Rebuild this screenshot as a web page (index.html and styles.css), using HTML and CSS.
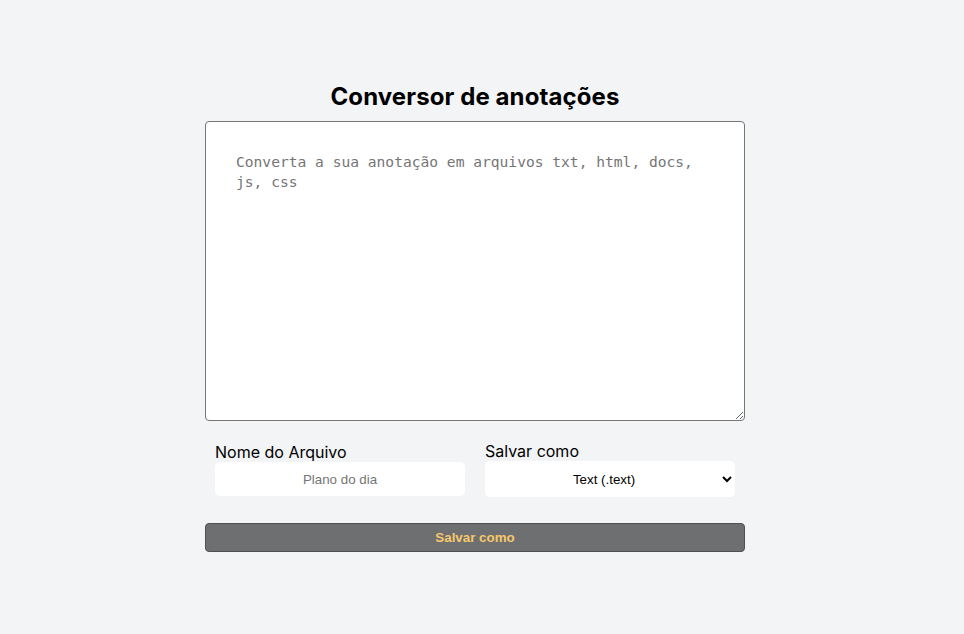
FILE: index.html
```html
<!DOCTYPE html>
<html lang="pt">
<head>
<meta charset="utf-8">
<title>Conversor de anotações</title>
<link rel="stylesheet" href="styles.css">
</head>
<body>
<main class="page">
  <div class="app">
    <h1 class="title">Conversor de anotações</h1>
    <textarea class="note" placeholder="Converta a sua anotação em arquivos txt, html, docs, js, css"></textarea>
    <div class="fields">
      <div class="field">
        <label class="label label-name" for="nome">Nome do Arquivo</label>
        <input id="nome" class="input" type="text" placeholder="Plano do dia">
      </div>
      <div class="field">
        <label class="label" for="tipo">Salvar como</label>
        <select id="tipo" class="select">
          <option>Text (.text)</option>
          <option>HTML (.html)</option>
          <option>Docs (.doc)</option>
          <option>JavaScript (.js)</option>
          <option>CSS (.css)</option>
        </select>
      </div>
    </div>
    <button class="save" type="button">Salvar como</button>
  </div>
</main>
</body>
</html>
```
FILE: styles.css
```css
html, body {
  margin: 0;
  padding: 0;
  background: #f3f4f6;
}
body {
  font-family: Inter, "Open Sans", sans-serif;
  min-height: 634px;
}
.page {
  display: flex;
  justify-content: center;
  padding: 80px 14px 0 0;
}
.app {
  width: 540px;
  display: flex;
  flex-direction: column;
}
.title {
  margin: 0 0 8px;
  text-align: center;
  font-size: 24px;
  font-weight: 700;
  line-height: 33px;
  color: #000;
  letter-spacing: 0.1px;
}
.note {
  box-sizing: border-box;
  width: 540px;
  height: 300px;
  margin: 0;
  padding: 30px;
  border: 1px solid #767676;
  border-radius: 4px;
  background: #fff;
  font-family: "DejaVu Sans Mono", "Liberation Mono", monospace;
  font-size: 14.6px;
  line-height: 20px;
  color: #000;
  resize: both;
}
.note::placeholder {
  color: #757575;
}
.fields {
  display: flex;
  gap: 20px;
  padding: 0 10px;
  margin-top: 20px;
}
.field {
  width: 250px;
  display: flex;
  flex-direction: column;
}
.label {
  font-size: 16px;
  line-height: 20px;
  color: #000;
}
.label-name {
  margin-top: 1px;
}
.input {
  box-sizing: border-box;
  height: 34px;
  border: none;
  border-radius: 5px;
  background: #fff;
  text-align: center;
  font-family: "Liberation Sans", Arial, sans-serif;
  font-size: 13.33px;
  color: #000;
  outline: none;
}
.input::placeholder {
  color: #757575;
}
.select {
  box-sizing: border-box;
  height: 36px;
  border: none;
  border-radius: 5px;
  background: #fff;
  text-align: center;
  text-align-last: center;
  font-family: "Liberation Sans", Arial, sans-serif;
  font-size: 13.33px;
  color: #000;
  padding: 0 4px;
}
.save {
  margin-top: 26px;
  height: 29px;
  box-sizing: border-box;
  border: 1px solid #4f5052;
  border-radius: 4px;
  background: #6e6f71;
  color: #f5c86a;
  font-family: "Liberation Sans", Arial, sans-serif;
  font-weight: 700;
  font-size: 13.33px;
  cursor: pointer;
}
```
